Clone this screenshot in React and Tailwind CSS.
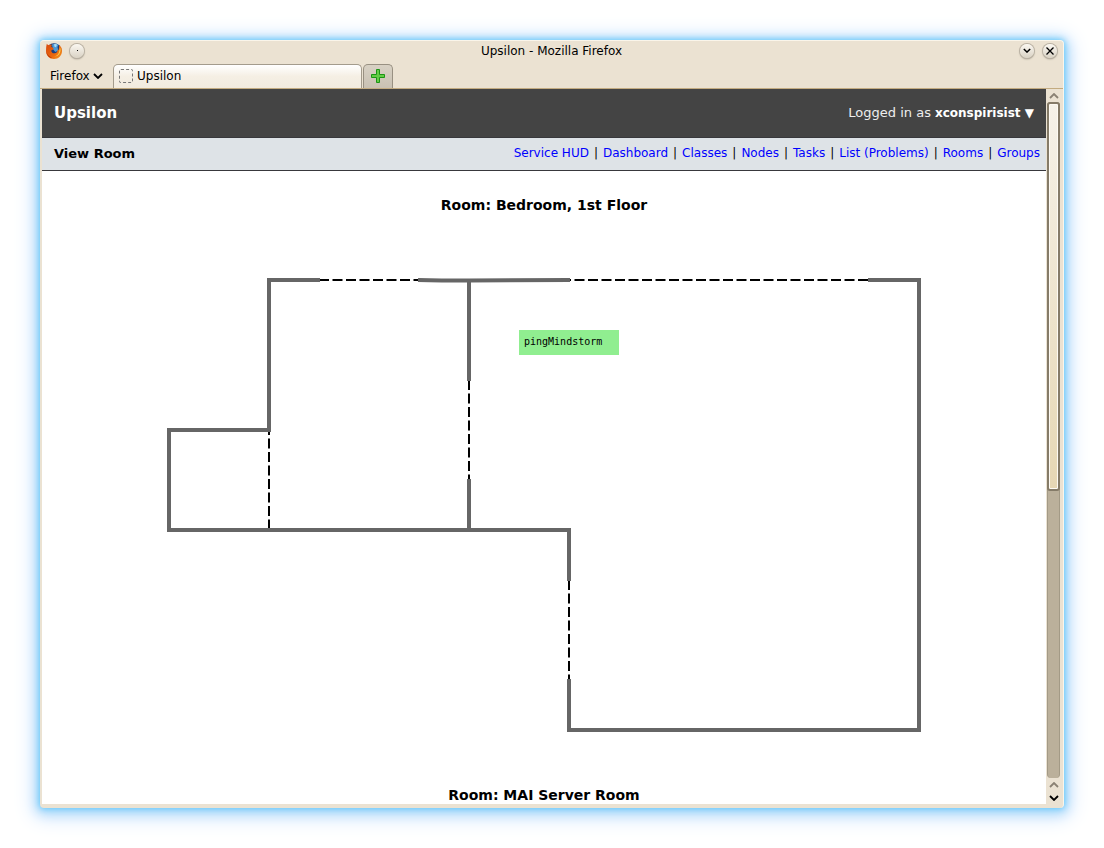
import { useState } from "react";

const links = ["Service HUD", "Dashboard", "Classes", "Nodes", "Tasks", "List (Problems)", "Rooms", "Groups"];

function FirefoxLogo() {
  return (
    <svg className="h-4 w-4" viewBox="0 0 16 16" aria-hidden="true">
      <defs>
        <linearGradient id="fox" x1="0" y1="0" x2="1" y2="1">
          <stop offset="0" stopColor="#d8480c" />
          <stop offset=".6" stopColor="#e8680f" />
          <stop offset="1" stopColor="#f39a22" />
        </linearGradient>
      </defs>
      <circle cx="8" cy="7.500" r="7.300" fill="#1d3c78" />
      <path d="M6 1.500Q9-.3 12.500 1.800L11.500 4l.8 3.500-3 1.500-2.500-3z" fill="#4d9ad6" />
      <path d="M8 1.200q2-.5 3 .5l-1 2.500-1.500-.5z" fill="#a9dbf5" />
      <path d="M.8.8 2.200 2.300Q4 1.200 6 1.800L5.200 3.800l2.500 1.400-.5 1.300-2 1q.3 3 3.300 2.800 3-.3 3.200-3.800L12.800 7l.4-5.300Q16 4.300 16 8c0 4.600-3.500 8-8 8S0 12.600 0 8Q0 3.800.8.8z" fill="url(#fox)" />
      <path d="M14 4q1.500 4-.8 7.200-2 2.500-5 2.300 4-1 4.800-4.300z" fill="#fbd24a" />
      <path d="M.3 8.500q1.200 4.500 6.200 6.500Q1.200 15 .3 8.500z" fill="#a92c07" />
    </svg>
  );
}

function RoundButton({ label, children }) {
  return (
    <button
      aria-label={label}
      className="flex h-3.5 w-3.5 items-center justify-center rounded-full bg-linear-to-b from-[#fbf8f2] to-[#d9d2c4] shadow-[0_0_0_1px_#b9b1a3,0_1px_2px_#8d8678]"
    >
      {children}
    </button>
  );
}

function Chevron({ down, className }) {
  return (
    <svg className={className} viewBox="0 0 10 6" fill="none" stroke="currentColor" strokeWidth="1.800" aria-hidden="true">
      <path d={down ? "M1 1l4 4 4-4" : "M1 5l4-4 4 4"} />
    </svg>
  );
}

function FloorPlan() {
  return (
    <svg className="mx-auto block h-[456px] w-[756px]" viewBox="166 277 756 456" role="img" aria-label="Bedroom floor plan">
      <g fill="none" stroke="#000" strokeWidth="2" strokeDasharray="10 3.500">
        <path d="M319 280H419" />
        <path d="M569 280H869" strokeDashoffset="8" />
        <path d="M269 430V530" strokeDashoffset="5" />
        <path d="M469 380V480" />
        <path d="M569 580V680" />
      </g>
      <g fill="none" stroke="#666" strokeWidth="4">
        <path d="M320 280H269V430H169V530H569V581" />
        <path d="M418 280Q440 280.500 469 280.500T570 280" />
        <path d="M469 280V381M469 479V530" />
        <path d="M868 280H919V730H569V679" />
      </g>
      <rect x="519" y="330" width="100" height="25" fill="#90ee90" />
      <text x="524" y="345" fontSize="10" className="font-['DejaVu_Sans_Mono',monospace]">
        pingMindstorm
      </text>
    </svg>
  );
}

function Scrollbar() {
  return (
    <div className="flex w-[17px] shrink-0 flex-col items-center bg-[#ebe2d2] pr-0.5" aria-hidden="true">
      <div className="flex h-[13px] items-center">
        <Chevron className="h-1.5 w-2.5 text-[#8a8173]" />
      </div>
      <div className="flex w-[13px] flex-1 flex-col rounded border-x border-[#a39a86] bg-[#bbb09b]">
        <div className="-mx-px h-[389px] rounded-[3px] border-2 border-[#857b68] bg-linear-to-b from-[#f6f2e9] to-[#e6d7b4] shadow-[inset_0_0_0_1px_#fdfaf3]" />
      </div>
      <div className="flex h-[26px] flex-col items-center justify-around">
        <Chevron className="h-1.5 w-2.5 text-[#8a8173]" />
        <Chevron down className="h-1.5 w-2.5 text-black" />
      </div>
    </div>
  );
}

export default function App() {
  const [open, setOpen] = useState(false);
  return (
    <div className="flex h-screen bg-white p-10 font-['DejaVu_Sans',sans-serif] text-black">
      <div className="flex min-w-0 flex-1 flex-col rounded-[4px] border-t border-r border-[#faf5ea] bg-[#ebe2d2] pb-1 shadow-[0_0_6px_#55c6fb,0_2px_12px_3px_#a5d8fa,0_3px_20px_7px_#d3e6fd]">
        <header>
          <div className="flex h-[19px] items-center justify-between pr-1.5 pl-1.5">
            <div className="flex w-20 items-center gap-2">
              <FirefoxLogo />
              <RoundButton label="On all desktops">
                <span className="h-px w-px bg-black" />
              </RoundButton>
            </div>
            <h1 className="text-xs">Upsilon - Mozilla Firefox</h1>
            <div className="flex w-20 items-center justify-end gap-[9px]">
              <RoundButton label="Minimize">
                <Chevron down className="h-[5px] w-2" />
              </RoundButton>
              <RoundButton label="Close">
                <svg className="h-2 w-2" viewBox="0 0 8 8" stroke="currentColor" strokeWidth="1.300" aria-hidden="true">
                  <path d="M.5.5l7 7M7.500.5l-7 7" />
                </svg>
              </RoundButton>
            </div>
          </div>
          <div className="flex h-[29px] items-end border-b border-[#c3ab80] pl-2.5">
            <button className="flex h-6 w-[63px] items-center gap-[3px] text-xs">
              Firefox
              <Chevron down className="h-1.5 w-2.5" />
            </button>
            <button className="flex h-6 w-[249px] items-center gap-1 rounded-t-[5px] border border-b-0 border-[#a39b8c] bg-linear-to-b from-white via-[#f5efe4] to-[#f2ebdf] pb-0.5 pl-[5px] text-xs">
              <span className="h-3.5 w-3.5 rounded-xs border border-dashed border-[#777]" />
              Upsilon
            </button>
            <button aria-label="New tab" className="ml-px flex h-6 w-[30px] items-center justify-center rounded-t-[5px] border border-b-0 border-[#989082] bg-linear-to-b from-[#d8d1c4] to-[#c9c1b3] pb-0.5">
              <svg className="h-3.5 w-3.5" viewBox="0 0 14 14" aria-hidden="true">
                <path d="M5.500.5h3v5h5v3h-5v5h-3v-5h-5v-3h5z" fill="#62cc45" stroke="#1b9414" strokeLinejoin="round" />
              </svg>
            </button>
          </div>
        </header>
        <div className="flex min-h-0 flex-1 pl-0.5">
          <main className="min-w-0 flex-1 overflow-hidden bg-white">
            <div className="flex h-[49px] items-center justify-between border-b border-[#38383c] bg-[#444] px-3 text-white">
              <h2 className="text-[15px] font-bold">Upsilon</h2>
              <button onClick={() => setOpen(!open)} aria-expanded={open} className="flex items-baseline gap-1 text-[13px] text-[#eee]">
                Logged in as <b className="text-xs text-white">xconspirisist ▼</b>
              </button>
            </div>
            <div className="flex h-[33px] items-center justify-between border-b border-[#38383c] bg-[#dee3e7] pr-1.5 pl-3">
              <h3 className="text-[13px] font-bold">View Room</h3>
              <nav className="flex gap-[5px] pb-0.5 text-xs">
                {links.map((link, i) => (
                  <span key={link} className="flex gap-[5px]">
                    {i > 0 && <span>|</span>}
                    <a href="#" className="text-[#0000ff]">{link}</a>
                  </span>
                ))}
              </nav>
            </div>
            <section className="pt-6">
              <h3 className="text-center text-sm leading-5 font-bold">Room: Bedroom, 1st Floor</h3>
              <div className="pt-[62px]">
                <FloorPlan />
              </div>
            </section>
            <section className="pt-[52px]">
              <h3 className="text-center text-sm leading-5 font-bold">Room: MAI Server Room</h3>
            </section>
          </main>
          <Scrollbar />
        </div>
      </div>
    </div>
  );
}
